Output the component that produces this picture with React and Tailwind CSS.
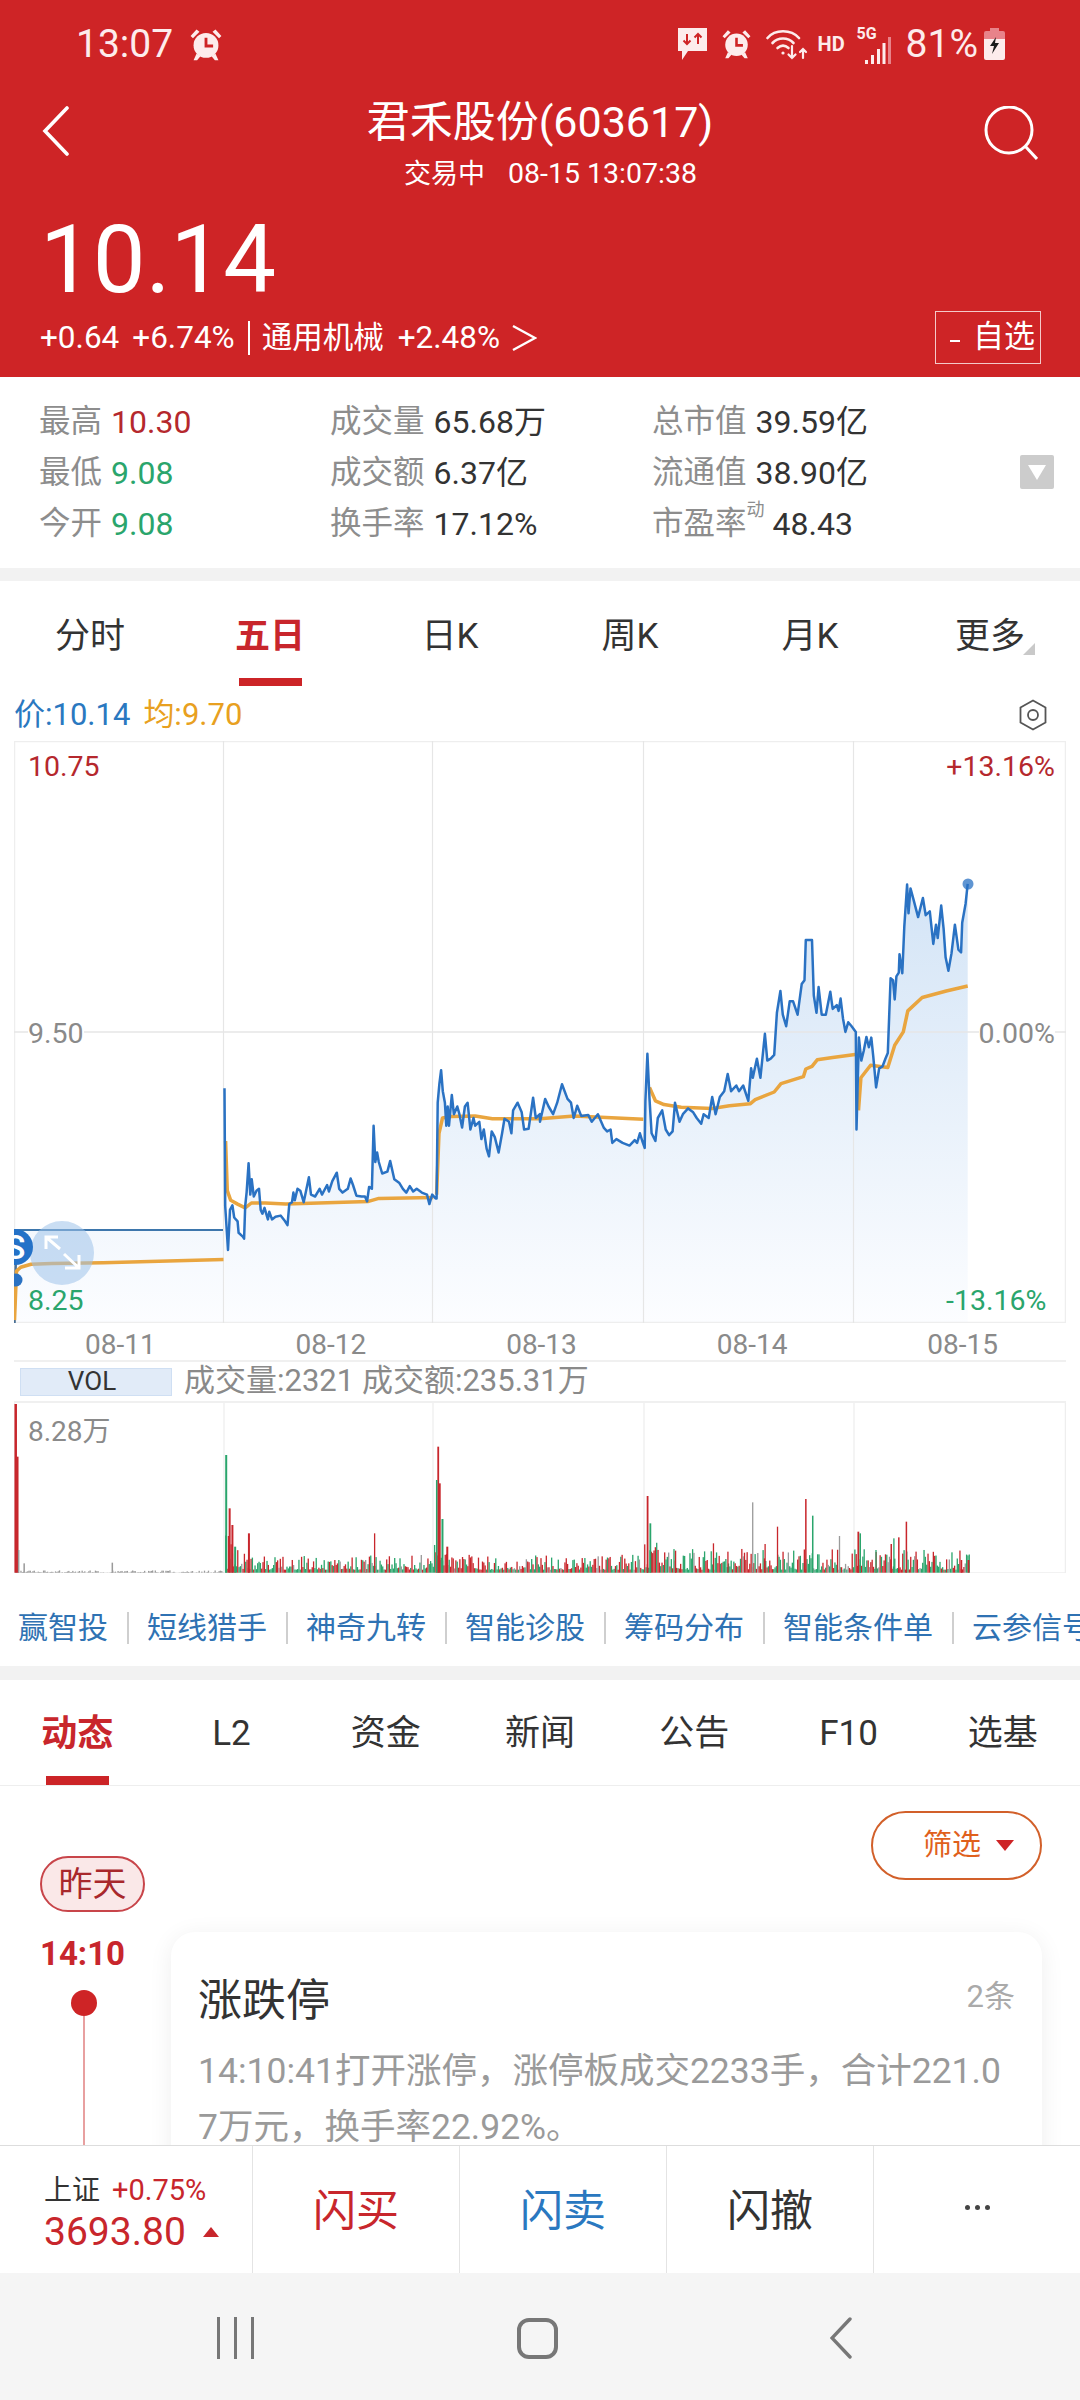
import React from "react";

// Intraday price, stored on a fine plot grid and converted to page pixels by toPage.
const SX = 2.904;
const SY = 2.613;
const toPage = (pts, x0 = 0) => pts.map(([x, y]) => [x0 + x / SX, 720 + y / SY]);
const line = (pts) => pts.map(([x, y]) => `${x.toFixed(1)},${y.toFixed(1)}`).join(" ");

const priceA = [[652,962],[654,1270],[662,1385],[668,1280],[675,1268],[680,1300],[690,1310],[693,1340],[705,1350],[709,1355],[712,1270],[716,1235],[722,1158],[727,1240],[731,1200],[737,1245],[745,1230],[752,1225],[757,1280],[762,1290],[768,1275],[778,1305],[782,1285],[790,1305],[800,1298],[815,1295],[828,1310],[835,1320],[840,1265],[848,1260],[852,1235],[856,1255],[864,1225],[872,1230],[882,1260],[890,1225],[897,1195],[903,1240],[915,1245],[928,1225],[935,1240],[950,1215],[955,1232],[965,1205],[978,1183],[985,1225],[995,1235],[1010,1225],[1018,1198],[1025,1215],[1035,1243],[1050,1245],[1060,1245],[1066,1258],[1072,1220],[1080,1225],[1085,1060],[1090,1155],[1095,1130],[1100,1155],[1110,1185],[1125,1180],[1133,1152],[1145,1200],[1160,1210],[1170,1225],[1180,1235],[1190,1218],[1200,1232],[1210,1225],[1225,1235],[1240,1240],[1247,1265],[1255,1240],[1265,1250],[1268,1250],[1271,1000],[1276,950],[1281,915],[1286,970],[1292,1000],[1296,1060],[1300,1010],[1304,1060],[1312,980],[1318,1030],[1328,1010],[1334,1030],[1342,1065],[1350,1010],[1358,1000],[1366,1070],[1375,1040],[1380,1060],[1392,1050],[1398,1095],[1405,1070],[1413,1120],[1420,1140],[1428,1075],[1437,1090],[1448,1130],[1458,1080],[1465,1042],[1478,1050],[1485,1080],[1490,1020],[1503,1000],[1515,1025],[1522,1070],[1535,1068],[1548,987],[1556,1040],[1568,1030]];
const priceB = [[0,1050],[15,990],[25,1010],[38,1030],[50,1000],[64,952],[80,990],[90,1000],[98,1040],[108,1008],[120,1035],[140,1032],[150,1050],[168,1030],[185,1065],[195,1075],[205,1070],[210,1105],[222,1095],[240,1105],[260,1112],[275,1098],[282,1105],[290,1080],[297,1100],[304,1118],[306,995],[312,872],[318,990],[324,1080],[335,1100],[342,1040],[355,1020],[365,1070],[375,1085],[385,1075],[392,1000],[405,1050],[415,1030],[430,1015],[445,1025],[455,1040],[468,1055],[475,1030],[490,1040],[500,985],[510,1030],[522,985],[535,970],[545,925],[555,970],[570,955],[578,970],[590,955],[605,995],[613,910],[618,935],[630,885],[640,935],[653,820],[660,890],[670,885],[680,875],[688,765],[698,708],[705,770],[715,800],[725,735],[735,735],[748,770],[760,690],[768,680],[772,575],[790,575],[795,720],[803,765],[809,698],[818,770],[830,770],[843,710],[850,755],[862,745],[867,760],[873,728],[880,780],[887,815],[895,790],[905,800],[917,815],[919,1070],[926,830],[933,890],[940,865],[948,828],[955,855],[962,830],[968,880],[976,960],[985,910],[995,905],[1003,885],[1010,870],[1018,675],[1025,680],[1030,730],[1035,670],[1042,660],[1044,612],[1052,662],[1058,540],[1066,430],[1070,505],[1076,440],[1085,470],[1098,515],[1105,490],[1112,465],[1120,510],[1132,500],[1142,585],[1150,535],[1155,570],[1165,485],[1172,545],[1178,620],[1186,655],[1195,610],[1205,535],[1215,600],[1223,607],[1226,530],[1236,480],[1242,428]];
const pricePath = [...toPage(priceA), ...toPage(priceB, 540)];

// Average price, one run per trading day.
const avgRuns = [
  toPage([[42,1568],[48,1440],[60,1430],[90,1422],[150,1420],[300,1418],[649,1410]]),
  toPage([[655,1100],[660,1230],[670,1255],[690,1265],[712,1275],[730,1262],[770,1262],[830,1265],[1070,1258],[1100,1250],[1258,1248]]),
  [...toPage([[1268,1240],[1275,1080],[1285,1040],[1310,1036],[1380,1035],[1430,1042],[1568,1042]]), ...toPage([[100,1035],[300,1043]], 540)],
  toPage([[318,960],[335,995],[360,1005],[410,1012],[500,1015],[550,1008],[610,1003],[625,992],[680,972],[700,950],[765,932],[772,912],[790,905],[805,888],[850,882],[915,874]], 540),
  toPage([[925,1020],[932,935],[960,902],[1010,908],[1030,850],[1055,815],[1068,760],[1110,725],[1180,708],[1242,695]], 540),
];

const RED = "#c8262c";
const GREEN = "#2aa56c";
const GRAY = "#9a9a9a";
const BASE = 1572.7;
const DAY_OPENS = [224, 433, 644, 854];

// Seeded generator so the volume bars stay the same on every render.
const seeded = (seed) => () => {
  seed = (seed + 0x6d2b79f5) | 0;
  let t = Math.imul(seed ^ (seed >>> 15), 1 | seed);
  t = (t + Math.imul(t ^ (t >>> 7), 61 | t)) ^ t;
  return ((t ^ (t >>> 14)) >>> 0) / 4294967296;
};

const buildVolumes = () => {
  const rnd = seeded(20210815);
  const bars = [];
  for (let x = 15; x < 969; x += 1.33) {
    const r = rnd();
    if (x < 223) {
      bars.push({ x, h: r * r * 2.5, c: GRAY });
      continue;
    }
    const open = DAY_OPENS.filter((d) => d <= x).pop();
    const decay = 34 * Math.exp(-(x - open) / 9);
    const lift = x > 650 ? 1.4 : 1;
    const h = 3 + r * r * 15 * lift + decay * rnd();
    const pick = rnd();
    bars.push({ x, h, c: pick < 0.46 ? RED : pick < 0.93 ? GREEN : GRAY });
  }
  return bars;
};

const spikes = [[21,192,RED,2.5],[24,350,RED,2],[26,630,GRAY,1.5],[34,670,GRAY,1.5],[162,668,GRAY,1.5],[327,345,GREEN,2],[332,505,RED,2],[336,555,RED,2],[340,620,GREEN,2],[360,580,RED,2],[543,580,RED,1.3],[530,660,GRAY,1.3],[635,320,RED,1.8],[633,420,GREEN,1.5],[637,430,RED,2],[641,537,GREEN,2],[648,620,RED,2],[939,468,RED,1.8],[943,550,GREEN,1.8],[980,632,RED,1.3],[1035,610,RED,1.3],[1056,635,RED,1.3],[1092,487,GRAY,1.3],[1110,612,RED,1.3],[1128,560,RED,1.3],[1169,477,RED,1.5],[1179,527,GREEN,1.5],[1218,588,GRAY,1.3],[1245,575,RED,1.8],[1248,580,GREEN,1.5],[1271,630,GREEN,1.3],[1293,612,RED,1.5],[1297,595,GREEN,1.3],[1304,592,RED,1.5],[1315,545,RED,1.5],[1395,660,RED,1.5],[1405,660,RED,1.8]];

const volumes = buildVolumes();

const Bell = ({ className }) => (
  <svg viewBox="1.5 1.5 27 27.5" className={className} fill="#fdecec">
    <circle cx="15" cy="16" r="10.5" />
    <path d="M2 8 L7 2.5 L9.5 4.5 L4 10 Z M28 8 L23 2.5 L20.5 4.5 L26 10 Z" />
    <path d="M7 23 L4.5 28.5 L7.5 28.5 L10.5 25 Z M23 23 L25.5 28.5 L22.5 28.5 L19.5 25 Z" />
    <path d="M15 9.5 V16.5 H21" fill="none" stroke="#ce2426" strokeWidth="2.4" />
  </svg>
);

const StatusIcons = () => (
  <div className="flex items-center">
    <svg viewBox="0 0 31 34" className="w-[31px] h-[34px]">
      <path d="M1 1 H30 V24 H11 L5 33 V24 H1 Z" fill="#fdecec" />
      <path d="M10 7 V17 M6.5 13.5 L10 17 L13.5 13.5 M21 17 V7 M17.5 10.5 L21 7 L24.5 10.5" fill="none" stroke="#ce2426" strokeWidth="2" />
    </svg>
    <Bell className="ml-[14px] w-[29px] h-[30px]" />
    <svg viewBox="0 0 42 34" className="ml-[15px] w-[42px] h-[34px]" fill="none" stroke="#fdecec" strokeWidth="2.6" strokeLinecap="round">
      <path d="M1.5 11 C9 2 25 2 33 11" />
      <path d="M6.5 16 C12 10 22 10 27.5 16" />
      <path d="M11.5 21 C15 18 19 18 22.5 21" />
      <circle cx="17" cy="26" r="1.6" fill="#fdecec" stroke="none" />
      <path d="M26 19 V31 M22.5 27.5 L26 31 L29.5 27.5 M37 31 V22 M34 25 L37 22 L40 25" strokeWidth="2.2" />
    </svg>
    <span className="ml-[10px] w-[24px] text-[20px] leading-none font-bold text-[#fdecec]">HD</span>
    <div className="relative ml-[15px] w-[34px] h-[34px]">
      <span className="absolute left-0 top-[-1px] text-[16px] leading-none font-bold text-[#fdecec]">5G</span>
      <svg viewBox="0 0 26 27" className="absolute right-0 bottom-[-3px] w-[26px] h-[27px]">
        <rect x="0" y="23" width="3" height="4" fill="#fdecec" />
        <rect x="6" y="18" width="3" height="9" fill="#fdecec" />
        <rect x="12" y="12" width="3" height="15" fill="#fdecec" />
        <rect x="17.5" y="6" width="3" height="21" fill="#fdecec" />
        <rect x="23" y="0" width="3" height="27" fill="#e8838a" />
      </svg>
    </div>
    <span className="ml-[15px] text-[39px] leading-none text-[#fdecec]">81%</span>
    <svg viewBox="0 0 21 32" className="ml-[6px] w-[21px] h-[32px]">
      <path d="M6 0 H15 V3 H19 Q21 3 21 5 V11 H0 V5 Q0 3 2 3 H6 Z" fill="#e8838a" />
      <path d="M0 11 H21 V30 Q21 32 19 32 H2 Q0 32 0 30 Z" fill="#fdecec" />
      <path d="M12 9 L6 18 H10 L8 26 L15 15 H11 Z" fill="#1c1c1c" />
    </svg>
  </div>
);

const Stat = ({ label, value, tone = "text-[#333]", sup }) => (
  <div className="h-[51px] flex items-center whitespace-nowrap">
    <span className="text-[31.5px] text-[#8d8d8d]">{label}</span>
    {sup && <span className="self-start mt-[1px] text-[18px] leading-[22px] text-[#8d8d8d]">{sup}</span>}
    <span className={`${sup ? "ml-[8px]" : "ml-[9px]"} text-[32px] ${tone}`}>{value}</span>
  </div>
);

const PeriodTab = ({ label, active, more }) => (
  <div className="flex-1 flex flex-col items-center pt-[31px]">
    <div className={`relative h-[50px] flex items-center text-[35px] ${active ? "font-bold text-[#c8262c]" : "text-[#333]"}`}>
      {label}
      {more && <span className="absolute left-[68px] bottom-[7px] w-0 h-0 border-l-[12px] border-l-transparent border-b-[12px] border-b-[#c9c9c9]" />}
    </div>
    {active && <div className="mt-auto w-[63px] h-[8px] bg-[#cc2427]" />}
  </div>
);

const InfoTab = ({ label, active }) => (
  <div className="flex-1 flex flex-col items-center pt-[29px]">
    <div className={`h-[50px] flex items-center ${active ? "text-[36px] font-bold text-[#c8262c]" : "text-[35px] text-[#333]"}`}>{label}</div>
    {active && <div className="mt-auto w-[63px] h-[9px] bg-[#cc2427]" />}
  </div>
);

const Tool = ({ label, first }) => (
  <>
    {!first && <span className="w-[2px] h-[32px] bg-[#cfcfcf] shrink-0" />}
    <span className="text-[30px] leading-[32px] text-[#2f72b3] whitespace-nowrap shrink-0">{label}</span>
  </>
);

const TradeButton = ({ label, tone }) => (
  <div className={`w-[207px] border-l border-[#e4e4e4] flex items-center justify-center pt-[3px] text-[43px] ${tone}`}>{label}</div>
);

const PriceChart = () => {
  const fillTop = `${line(pricePath)} ${pricePath[pricePath.length - 1][0].toFixed(1)},1323 ${pricePath[0][0].toFixed(1)},1323`;
  return (
    <div className="relative ml-[14px] w-[1052px] h-[582px] overflow-hidden">
      <svg viewBox="14 741 1052 582" className="block w-full h-full">
        <defs>
          <linearGradient id="areaFill" gradientUnits="userSpaceOnUse" x1="0" y1="880" x2="0" y2="1323">
            <stop offset="0" stopColor="#d3e4f6" />
            <stop offset="1" stopColor="#fcfdff" />
          </linearGradient>
        </defs>
        <rect x="14" y="1230" width="210" height="93" fill="url(#areaFill)" />
        <polygon points={fillTop} fill="url(#areaFill)" />
        <rect x="14.5" y="741.5" width="1051" height="581" fill="none" stroke="#eeeeee" strokeWidth="1.5" />
        {DAY_OPENS.map((x) => (
          <line key={x} x1={x - 0.5} x2={x - 0.5} y1="741" y2="1323" stroke="#e6e6e6" strokeWidth="1.2" />
        ))}
        <line x1="14" x2="1066" y1="1032" y2="1032" stroke="#e6e6e6" strokeWidth="1.5" />
        <line x1="14" x2="223" y1="1230" y2="1230" stroke="#3d76ac" strokeWidth="2" />
        <line x1="14.5" x2="16" y1="1323" y2="1250" stroke="#4a7096" strokeWidth="2.5" />
        {avgRuns.map((run, i) => (
          <polyline key={i} points={line(run)} fill="none" stroke="#e9a53f" strokeWidth="3.5" strokeLinejoin="round" />
        ))}
        <polyline points={line(pricePath)} fill="none" stroke="#2a72c3" strokeWidth="2.5" strokeLinejoin="round" />
        <circle cx="968" cy="884" r="5.5" fill="#2a72c3" opacity="0.75" />
        <circle cx="16" cy="1280" r="6.5" fill="#2a72c3" />
        <circle cx="62" cy="1253" r="32" fill="#9fc3ea" opacity="0.55" />
        <path d="M60 1249 L46 1237 M46 1249 V1237 H58 M64 1254 L79 1268 M79 1255 V1268 H65" fill="none" stroke="#ffffff" strokeWidth="3" />
      </svg>
      <span className="absolute left-[-17px] top-[488px] w-[36px] h-[36px] rounded-full bg-[#2472c8] text-white text-[34px] leading-[36px] text-center font-medium">S</span>
      <span className="absolute left-[14px] top-[12px] h-[28px] text-[28.5px] leading-[28px] text-[#b5282d]">10.75</span>
      <span className="absolute left-[14px] top-[279px] h-[28px] text-[28.5px] leading-[28px] text-[#8a8a8a] bg-white">9.50</span>
      <span className="absolute left-[14px] top-[546px] h-[28px] text-[28.5px] leading-[28px] text-[#2aa56c]">8.25</span>
      <span className="absolute right-[11px] top-[12px] h-[28px] text-[28.5px] leading-[28px] text-[#b5282d]">+13.16%</span>
      <span className="absolute right-[11px] top-[279px] h-[28px] text-[28.5px] leading-[28px] text-[#8a8a8a] bg-white">0.00%</span>
      <span className="absolute left-[932px] top-[546px] h-[28px] text-[28.5px] leading-[28px] text-[#2aa56c]">-13.16%</span>
    </div>
  );
};

const VolumeChart = () => (
  <div className="relative ml-[14px] w-[1052px] h-[170px]">
    <svg viewBox="14 1403 1052 170" className="block w-full h-full">
      <path d="M14.5 1403 V1573 H1065.5 V1403" fill="none" stroke="#eeeeee" strokeWidth="1.5" />
      {DAY_OPENS.map((x) => (
        <line key={x} x1={x} x2={x} y1="1403" y2="1573" stroke="#e9e9e9" strokeWidth="1" />
      ))}
      {volumes.map((b, i) => (
        <rect key={i} x={b.x} y={BASE - b.h} width="1.3" height={b.h} fill={b.c} />
      ))}
      {spikes.map(([x, y, c, w], i) => {
        const top = 1340 + y / 3;
        return <rect key={i} x={x / 1.452} y={top} width={w} height={BASE - top} fill={c} />;
      })}
    </svg>
    <span className="absolute left-[14px] top-[15px] text-[28px] leading-[28px] text-[#8a8a8a]">8.28万</span>
  </div>
);

export default function App() {
  return (
    <div className="w-[1080px] h-[2400px] flex flex-col overflow-hidden bg-white font-[family-name:Roboto,'Noto_Sans_CJK_SC',sans-serif]">
      <main className="h-[2145px] overflow-hidden shrink-0">
        <header className="h-[377px] bg-[#ce2426] text-white">
          <div className="h-[88px] pl-[76px] pr-[75px] flex items-center justify-between">
            <div className="flex items-center">
              <span className="text-[39px] leading-none text-[#fdecec]">13:07</span>
              <Bell className="ml-[17px] w-[32px] h-[33px]" />
            </div>
            <StatusIcons />
          </div>
          <div className="h-[104px] px-[42px] grid grid-cols-[1fr_auto_1fr]">
            <svg viewBox="0 0 28 50" className="mt-[18px] w-[28px] h-[50px]" fill="none" stroke="#ffffff" strokeWidth="3.6" strokeLinecap="round">
              <path d="M25 2 L3 25 L25 48" />
            </svg>
            <div className="flex flex-col items-center">
              <div className="h-[68px] flex items-center text-[43px] whitespace-nowrap">君禾股份(603617)</div>
              <div className="ml-[21px] h-[36px] flex items-center whitespace-nowrap">
                <span className="text-[27px]">交易中</span>
                <span className="ml-[23px] text-[28.5px]">08-15 13:07:38</span>
              </div>
            </div>
            <svg viewBox="0 0 54 54" className="justify-self-end mt-[18px] w-[54px] h-[54px]" fill="none" stroke="#ffffff" strokeWidth="3">
              <circle cx="25" cy="24" r="23" />
              <path d="M41 40 L53 53" />
            </svg>
          </div>
          <div className="mt-[18px] h-[100px] pl-[40px] flex items-center text-[94px] leading-none">10.14</div>
          <div className="h-[60px] pl-[40px] pr-[39px] pb-[5px] flex items-center text-[31.5px] whitespace-nowrap">
            <span>+0.64</span>
            <span className="ml-[13px]">+6.74%</span>
            <span className="ml-[13px] w-[2px] h-[34px] bg-white" />
            <span className="ml-[12px] text-[30.5px]">通用机械</span>
            <span className="ml-[14px]">+2.48%</span>
            <svg viewBox="0 0 26 28" className="ml-[11px] w-[26px] h-[28px]" fill="none" stroke="#ffffff" strokeWidth="2.4">
              <path d="M2 2 L24 14 L2 26" />
            </svg>
            <div className="ml-auto w-[106px] h-[53px] border border-[#f4c9c9] flex items-center pl-[14px]">
              <span className="mt-[6px] w-[10px] h-[2px] bg-white" />
              <span className="ml-[13px] text-[31px]">自选</span>
            </div>
          </div>
        </header>

        <section className="h-[191px] pt-[19px] pl-[39px] pr-[26px] flex items-start">
          <div className="w-[291px]">
            <Stat label="最高" value="10.30" tone="text-[#b5282d]" />
            <Stat label="最低" value="9.08" tone="text-[#2aa56c]" />
            <Stat label="今开" value="9.08" tone="text-[#2aa56c]" />
          </div>
          <div className="w-[322px]">
            <Stat label="成交量" value="65.68万" />
            <Stat label="成交额" value="6.37亿" />
            <Stat label="换手率" value="17.12%" />
          </div>
          <div className="flex-1">
            <Stat label="总市值" value="39.59亿" />
            <Stat label="流通值" value="38.90亿" />
            <Stat label="市盈率" value="48.43" sup="动" />
          </div>
          <div className="mt-[59px] w-[34px] h-[34px] rounded-[2px] bg-[#cccccc] flex items-center justify-center">
            <span className="w-0 h-0 border-x-[9px] border-x-transparent border-t-[15px] border-t-white" />
          </div>
        </section>

        <div className="h-[13px] bg-[#f2f2f2]" />

        <nav className="h-[105px] flex">
          <PeriodTab label="分时" />
          <PeriodTab label="五日" active />
          <PeriodTab label="日K" />
          <PeriodTab label="周K" />
          <PeriodTab label="月K" />
          <PeriodTab label="更多" more />
        </nav>

        <div className="h-[55px] pt-[3px] pl-[14px] pr-[33px] flex items-center text-[31px] whitespace-nowrap">
          <span className="text-[#2a78c0]">价:10.14</span>
          <span className="ml-[13px] text-[#e8a020]">均:9.70</span>
          <svg viewBox="0 0 28 32" className="ml-auto w-[28px] h-[32px]" fill="none" stroke="#555555" strokeWidth="1.8">
            <path d="M14 1.5 L26.5 8.5 V23.5 L14 30.5 L1.5 23.5 V8.5 Z" />
            <circle cx="14" cy="16" r="5" />
          </svg>
        </div>

        <PriceChart />

        <div className="h-[37px] pt-[1px] pl-[15px] w-[1068px] grid grid-cols-5 items-center text-center text-[28px] text-[#8a8a8a]">
          <span>08-11</span>
          <span>08-12</span>
          <span>08-13</span>
          <span>08-14</span>
          <span>08-15</span>
        </div>

        <div className="ml-[14px] w-[1052px] h-[43px] border-y-2 border-[#f0f0f0] pl-[6px] flex items-center">
          <div className="w-[152px] h-[28px] bg-[#e1ebf8] border border-[#cfdff3] flex items-center justify-center pr-[8px] text-[26px] text-[#333]">VOL</div>
          <span className="ml-[12px] text-[31px] text-[#8a8a8a] whitespace-nowrap">成交量:2321 成交额:235.31万</span>
        </div>

        <VolumeChart />

        <section className="h-[93px] pt-[39px] pl-[18px] flex items-start gap-[18.5px] overflow-hidden">
          <Tool label="赢智投" first />
          <Tool label="短线猎手" />
          <Tool label="神奇九转" />
          <Tool label="智能诊股" />
          <Tool label="筹码分布" />
          <Tool label="智能条件单" />
          <Tool label="云参信号" />
        </section>

        <div className="h-[14px] bg-[#f2f2f2]" />

        <nav className="h-[106px] flex border-b border-[#eeeeee]">
          <InfoTab label="动态" active />
          <InfoTab label="L2" />
          <InfoTab label="资金" />
          <InfoTab label="新闻" />
          <InfoTab label="公告" />
          <InfoTab label="F10" />
          <InfoTab label="选基" />
        </nav>

        <section className="h-[359px] flex overflow-hidden">
          <aside className="w-[171px] shrink-0 pl-[40px] pt-[70px] flex flex-col">
            <div className="w-[105px] h-[56px] shrink-0 rounded-full bg-[#fae8e8] border-2 border-[#c8454a] flex items-center justify-center text-[34px] text-[#a8282c]">昨天</div>
            <div className="mt-[22px] h-[40px] shrink-0 flex items-center text-[33px] font-bold text-[#c8262c]">14:10</div>
            <div className="mt-[16px] ml-[31px] w-[26px] h-[26px] shrink-0 rounded-full bg-[#ce2426]" />
            <div className="ml-[43px] w-[2px] flex-1 bg-[#e8a0a0]" />
          </aside>
          <div className="flex-1 pr-[38px] flex flex-col">
            <div className="mt-[25px] shrink-0 self-end w-[171px] h-[69px] rounded-full border-2 border-[#d2602a] pl-[50px] flex items-center">
              <span className="text-[29px] text-[#e0601c]">筛选</span>
              <span className="ml-[15px] w-0 h-0 border-x-[9px] border-x-transparent border-t-[11px] border-t-[#ce2426]" />
            </div>
            <article className="mt-[52px] h-[300px] shrink-0 rounded-[24px] bg-white shadow-[0_4px_24px_rgba(0,0,0,0.07)] pl-[27px] pr-[27px] pt-[39px]">
              <div className="h-[60px] flex items-center justify-between">
                <span className="text-[44px] text-[#333]">涨跌停</span>
                <span className="mb-[8px] text-[31px] text-[#aaaaaa]">2条</span>
              </div>
              <p className="mt-[12px] text-[35.5px] leading-[56px] text-[#9a9a9a] break-all">14:10:41打开涨停，涨停板成交2233手，合计221.07万元，换手率22.92%。</p>
            </article>
          </div>
        </section>
      </main>

      <footer className="h-[128px] shrink-0 bg-white border-t border-[#dddddd] flex relative">
        <div className="w-[252px] pl-[44px] pt-[27px]">
          <div className="h-[36px] flex items-center whitespace-nowrap">
            <span className="text-[28px] text-[#333]">上证</span>
            <span className="ml-[12px] text-[29px] text-[#c8262c]">+0.75%</span>
          </div>
          <div className="h-[46px] flex items-center">
            <span className="text-[39px] text-[#c8262c]">3693.80</span>
            <span className="ml-[17px] w-0 h-0 border-x-[8px] border-x-transparent border-b-[10px] border-b-[#c8262c]" />
          </div>
        </div>
        <TradeButton label="闪买" tone="text-[#c8262c]" />
        <TradeButton label="闪卖" tone="text-[#2a78c0]" />
        <TradeButton label="闪撤" tone="text-[#333]" />
        <div className="flex-1 border-l border-[#e4e4e4] flex items-center justify-center gap-[5px] pb-[4px]">
          <span className="w-[5px] h-[5px] rounded-full bg-[#444]" />
          <span className="w-[5px] h-[5px] rounded-full bg-[#444]" />
          <span className="w-[5px] h-[5px] rounded-full bg-[#444]" />
        </div>
      </footer>

      <div className="h-[127px] shrink-0 bg-[#f5f5f5] flex items-center pt-[3px] relative">
        <div className="ml-[217px] flex gap-[14px]">
          <span className="w-[3px] h-[42px] bg-[#777]" />
          <span className="w-[3px] h-[42px] bg-[#777]" />
          <span className="w-[3px] h-[42px] bg-[#777]" />
        </div>
        <div className="ml-[263px] w-[41px] h-[41px] rounded-[12px] border-[4px] border-[#777]" />
        <svg viewBox="0 0 22 42" className="ml-[272px] w-[22px] h-[42px]" fill="none" stroke="#777777" strokeWidth="3.4" strokeLinecap="round">
          <path d="M20 2 L2 21 L20 40" />
        </svg>
      </div>
    </div>
  );
}
